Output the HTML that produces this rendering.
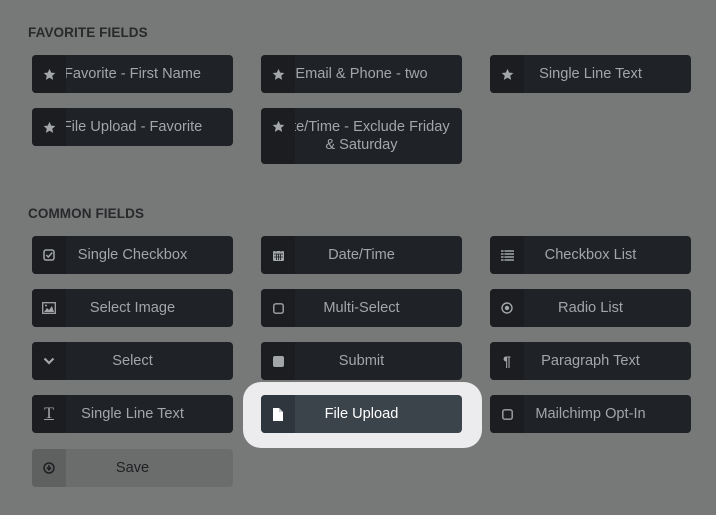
<!DOCTYPE html>
<html><head><meta charset="utf-8"><style>
body{margin:0;width:716px;height:515px;background:#777878;font-family:"Liberation Sans",sans-serif;position:relative;overflow:hidden}
h3{position:absolute;left:28px;margin:0;font-size:13.5px;font-weight:bold;color:#27292b;letter-spacing:.1px}
.b{position:absolute;width:201px;height:38px;background:#1f2226;border-radius:4px;overflow:hidden}
.t{position:absolute;left:0;right:0;top:0;bottom:0;display:flex;align-items:center;justify-content:center;text-align:center;font-size:14.6px;color:#a3a6a9;white-space:nowrap;line-height:18px}
.i{position:absolute;left:0;top:0;bottom:0;width:34px;background:#1b1d20;display:flex;align-items:center;justify-content:center;z-index:2;color:#a3a6a9}
.hl{position:absolute;left:243px;top:382px;width:239px;height:66px;background:#ececee;border-radius:18px}
svg{display:block}
</style></head><body>
<h3 style="top:25px">FAVORITE FIELDS</h3>
<h3 style="top:206px">COMMON FIELDS</h3>

<div class="b" style="left:32px;top:55px"><div class="t">Favorite - First Name</div><div class="i"><svg width="13" height="13" viewBox="0 0 24 24"><path fill="#a3a6a9" d="M12 1.5l3.2 7 7.6.8-5.7 5.1 1.6 7.5L12 18l-6.7 3.9 1.6-7.5L1.2 9.3l7.6-.8z"/></svg></div></div>
<div class="b" style="left:261px;top:55px"><div class="t">Email &amp; Phone - two</div><div class="i"><svg width="13" height="13" viewBox="0 0 24 24"><path fill="#a3a6a9" d="M12 1.5l3.2 7 7.6.8-5.7 5.1 1.6 7.5L12 18l-6.7 3.9 1.6-7.5L1.2 9.3l7.6-.8z"/></svg></div></div>
<div class="b" style="left:490px;top:55px"><div class="t">Single Line Text</div><div class="i"><svg width="13" height="13" viewBox="0 0 24 24"><path fill="#a3a6a9" d="M12 1.5l3.2 7 7.6.8-5.7 5.1 1.6 7.5L12 18l-6.7 3.9 1.6-7.5L1.2 9.3l7.6-.8z"/></svg></div></div>
<div class="b" style="left:32px;top:108px"><div class="t">File Upload - Favorite</div><div class="i"><svg width="13" height="13" viewBox="0 0 24 24"><path fill="#a3a6a9" d="M12 1.5l3.2 7 7.6.8-5.7 5.1 1.6 7.5L12 18l-6.7 3.9 1.6-7.5L1.2 9.3l7.6-.8z"/></svg></div></div>
<div class="b" style="left:261px;top:108px;height:56px"><div class="t" style="white-space:normal">Date/Time - Exclude Friday<br>&amp; Saturday</div><div class="i" style="align-items:flex-start;padding-top:12px"><svg width="13" height="13" viewBox="0 0 24 24"><path fill="#a3a6a9" d="M12 1.5l3.2 7 7.6.8-5.7 5.1 1.6 7.5L12 18l-6.7 3.9 1.6-7.5L1.2 9.3l7.6-.8z"/></svg></div></div>

<div class="b" style="left:32px;top:236px"><div class="t">Single Checkbox</div><div class="i"><svg width="12" height="12" viewBox="0 0 12 12"><rect x="1" y="1" width="10" height="10" rx="2" fill="none" stroke="#a3a6a9" stroke-width="1.5"/><path d="M3.3 6l2 2 4-4.5" fill="none" stroke="#a3a6a9" stroke-width="1.5"/></svg></div></div>
<div class="b" style="left:261px;top:236px"><div class="t">Date/Time</div><div class="i"><svg width="13" height="13" viewBox="0 0 13 13"><rect x="1" y="2" width="11" height="10" rx="1" fill="#a3a6a9"/><path d="M2 5h9M4 1v2M9 1v2M2 8h9M4.5 5v6M6.5 5v6M8.5 5v6" stroke="#1b1d20" stroke-width=".8"/></svg></div></div>
<div class="b" style="left:490px;top:236px"><div class="t">Checkbox List</div><div class="i"><svg width="13" height="11" viewBox="0 0 13 11"><path d="M0 1h13M0 4h13M0 7h13M0 10h13" stroke="#a3a6a9" stroke-width="1.6"/><path d="M3 0v11" stroke="#1b1d20" stroke-width=".8"/></svg></div></div>

<div class="b" style="left:32px;top:289px"><div class="t">Select Image</div><div class="i"><svg width="14" height="12" viewBox="0 0 14 12"><rect x=".7" y=".7" width="12.6" height="10.6" fill="none" stroke="#a3a6a9" stroke-width="1.3"/><path d="M2 10l3-4 2 2 3-4 2 6z" fill="#a3a6a9"/><circle cx="4" cy="3.5" r="1" fill="#a3a6a9"/></svg></div></div>
<div class="b" style="left:261px;top:289px"><div class="t">Multi-Select</div><div class="i"><svg width="11" height="11" viewBox="0 0 11 11"><rect x=".8" y=".8" width="9.4" height="9.4" rx="2" fill="none" stroke="#a3a6a9" stroke-width="1.4"/></svg></div></div>
<div class="b" style="left:490px;top:289px"><div class="t">Radio List</div><div class="i"><svg width="12" height="12" viewBox="0 0 12 12"><circle cx="6" cy="6" r="5" fill="none" stroke="#a3a6a9" stroke-width="1.4"/><circle cx="6" cy="6" r="2.2" fill="#a3a6a9"/></svg></div></div>

<div class="b" style="left:32px;top:342px"><div class="t">Select</div><div class="i"><svg width="12" height="8" viewBox="0 0 12 8"><path d="M1.5 1.5L6 6l4.5-4.5" fill="none" stroke="#a3a6a9" stroke-width="2.2"/></svg></div></div>
<div class="b" style="left:261px;top:342px"><div class="t">Submit</div><div class="i"><svg width="11" height="11" viewBox="0 0 11 11"><rect width="11" height="11" rx="2" fill="#a3a6a9"/></svg></div></div>
<div class="b" style="left:490px;top:342px"><div class="t">Paragraph Text</div><div class="i" style="font-size:14px;font-weight:bold">¶</div></div>

<div class="b" style="left:32px;top:395px"><div class="t">Single Line Text</div><div class="i" style="font-family:'Liberation Serif',serif;font-size:16px;text-decoration:underline">T</div></div>
<div class="hl"></div>
<div class="b" style="left:261px;top:395px;background:#3b434b"><div class="t" style="color:#fff">File Upload</div><div class="i" style="background:#30363d"><svg width="10" height="13" viewBox="0 0 10 13"><path d="M0 0h6l4 4v9H0z" fill="#fff"/><path d="M6 0v4h4" fill="#c8cacc"/></svg></div></div>
<div class="b" style="left:490px;top:395px"><div class="t">Mailchimp Opt-In</div><div class="i"><svg width="11" height="11" viewBox="0 0 11 11"><rect x=".8" y=".8" width="9.4" height="9.4" rx="2" fill="none" stroke="#a3a6a9" stroke-width="1.4"/></svg></div></div>

<div class="b" style="left:32px;top:449px;background:#6b6c6c"><div class="t" style="color:#1f2022">Save</div><div class="i" style="background:#5f6060"><svg width="12" height="12" viewBox="0 0 12 12"><circle cx="6" cy="6" r="5" fill="none" stroke="#1f2022" stroke-width="1.5"/><path d="M6 3v4M4 5.5L6 7.8 8 5.5" fill="none" stroke="#1f2022" stroke-width="1.5"/></svg></div></div>
</body></html>
